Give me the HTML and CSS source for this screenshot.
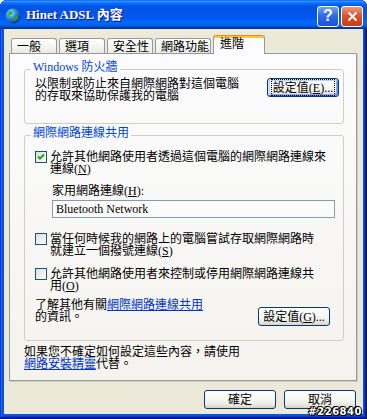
FILE: index.html
```html
<!DOCTYPE html>
<html lang="zh-Hant">
<head>
    <meta charset="UTF-8">
    <meta name="viewport" content="width=device-width, initial-scale=1.0">
    <title>Hinet ADSL 內容</title>
    <link rel="stylesheet" href="styles.css">
</head>
<body>
<div class="window">
    <!-- 標題列 -->
    <div class="titlebar">
        <svg class="app-icon" width="16" height="16" viewBox="0 0 16 16">
            <defs>
                <radialGradient id="globe" cx="0.35" cy="0.3" r="0.75">
                    <stop offset="0" stop-color="#C8F6FF"/>
                    <stop offset="0.35" stop-color="#3AA6E0"/>
                    <stop offset="1" stop-color="#1A2A8C"/>
                </radialGradient>
            </defs>
            <circle cx="8" cy="8" r="7.5" fill="url(#globe)"/>
            <path d="M4 3.5C6 2.5 8.5 3.5 7.5 5.5C6.5 7.5 4.5 6.5 3 9C2.4 7 2.8 5 4 3.5Z" fill="#34B04C"/>
            <path d="M9 8C11 7 13.5 8 13 10C12.5 12 10.5 13 9.2 12C8.6 10.5 9 9 9 8Z" fill="#2A9A40"/>
        </svg>
        <span class="title">Hinet ADSL 內容</span>
        <div class="caption-btns">
            <span class="cap help">?</span>
            <span class="cap close">
                <svg width="11" height="11" viewBox="0 0 11 11"><path d="M1.5 1.5L9.5 9.5M9.5 1.5L1.5 9.5" stroke="#fff" stroke-width="2"/></svg>
            </span>
        </div>
    </div>

    <div class="client">
        <!-- 分頁 -->
        <div class="tabs">
            <span class="tab">一般</span>
            <span class="tab">選項</span>
            <span class="tab">安全性</span>
            <span class="tab tab-wide">網路功能</span>
            <span class="tab active">進階</span>
        </div>

        <div class="panel">
            <fieldset class="group group-fw">
                <legend>Windows 防火牆</legend>
                <div class="fw-row">
                    <p class="txt">以限制或防止來自網際網路對這個電腦<br>的存取來協助保護我的電腦</p>
                    <button class="btn focused"><span class="focus-ring">設定值(<u>E</u>)...</span></button>
                </div>
            </fieldset>

            <fieldset class="group group-ics">
                <legend>網際網路連線共用</legend>
                <div class="check-row first">
                    <span class="cb"><svg width="10" height="10" viewBox="0 0 10 10"><path d="M2 4.5L4 6.5L8 2.5" fill="none" stroke="#21A121" stroke-width="2"/></svg></span>
                    <p class="txt">允許其他網路使用者透過這個電腦的網際網路連線來<br>連線(<u>N</u>)</p>
                </div>
                <p class="txt home-label">家用網路連線(<u>H</u>):</p>
                <div class="combo">Bluetooth Network</div>
                <div class="check-row dial">
                    <span class="cb"></span>
                    <p class="txt">當任何時候我的網路上的電腦嘗試存取網際網路時<br>就建立一個撥號連線(<u>S</u>)</p>
                </div>
                <div class="check-row ctrl">
                    <span class="cb"></span>
                    <p class="txt">允許其他網路使用者來控制或停用網際網路連線共<br>用(<u>O</u>)</p>
                </div>
                <div class="info-row">
                    <p class="txt">了解其他有關<a href="#">網際網路連線共用</a><br>的資訊。</p>
                    <button class="btn btn-g">設定值(<u>G</u>)...</button>
                </div>
            </fieldset>

            <p class="txt hint">如果您不確定如何設定這些內容，請使用<br><a href="#">網路安裝精靈</a>代替。</p>
        </div>

        <div class="actions">
            <button class="btn">確定</button>
            <button class="btn">取消</button>
        </div>
    </div>

    <span class="watermark">#226840</span>
</div>
</body>
</html>
```

FILE: styles.css
```css
* {
    box-sizing: border-box;
}
body {
    margin: 0;
    background: #fff;
    font-family: "Liberation Serif", "Noto Sans CJK TC", serif;
    font-size: 12px;
    line-height: 12px;
    color: #000;
}
.window {
    position: relative;
    width: 367px;
    height: 419px;
    display: flex;
    flex-direction: column;
    background: #0855DD;
    border-radius: 7px 7px 0 0;
    overflow: hidden;
    box-shadow: inset -1px -1px #00138C, inset 1px 1px #0831D9, inset -2px -2px #001EA0, inset 2px 2px #166AEE, inset -3px -3px #003BDA, inset 3px 3px #0855DD;
}

/* 標題列 */
.titlebar {
    height: 29px;
    flex: none;
    display: flex;
    align-items: center;
    padding: 0 4px 0 5px;
    background: linear-gradient(to bottom, #0058EE 0%, #3A93FF 4%, #288EFF 6%, #127DFF 8%, #0369FC 14%, #0262EE 17%, #0057E5 20%, #0054E3 24%, #0055EB 56%, #005BF5 66%, #026AFE 76%, #0062EF 86%, #0052D6 92%, #0040AB 94%, #003092 100%);
}
.app-icon {
    margin: 2px 5px 0 0;
}
.title {
    color: #fff;
    font-weight: bold;
    font-size: 13px;
    text-shadow: 1px 1px #0F1089;
}
.caption-btns {
    margin-left: auto;
    margin-top: 3px;
    display: flex;
    gap: 2px;
}
.cap {
    width: 22px;
    height: 21px;
    border: 1px solid #fff;
    border-radius: 3px;
    display: flex;
    align-items: center;
    justify-content: center;
}
.help {
    background: linear-gradient(#6FA6F8, #2E6BE6 45%, #1C52D8);
    color: #fff;
    font: bold 16px "Liberation Sans", sans-serif;
}
.close {
    background: linear-gradient(#EB9A80, #D9572F 45%, #C53D16);
}

/* 視窗內容 */
.client {
    flex: 1;
    margin: 0 4px 5px;
    background: #ECE9D8;
    display: flex;
    flex-direction: column;
}
.tabs {
    display: flex;
    align-items: flex-end;
    height: 24px;
    padding-left: 7px;
}
.tab {
    width: 46px;
    height: 15px;
    margin-right: 2px;
    padding: 2px 0 0 5px;
    border: 1px solid #919B9C;
    border-bottom: none;
    border-radius: 3px 3px 0 0;
    background: linear-gradient(#FFFFFF, #F3F3EF 60%, #ECEBE6);
    white-space: nowrap;
}
.tab-wide {
    width: 56px;
}
.tab.active {
    position: relative;
    z-index: 1;
    width: 52px;
    height: 19px;
    margin-bottom: -1px;
    padding: 2px 0 0 6px;
    border-top-color: #E68B2C;
    background: #FCFCFE;
    box-shadow: inset 0 2px #FFC73C;
}
.panel {
    height: 328px;
    margin: 0 6px 0 5px;
    padding: 7px 12px 0 14px;
    border: 1px solid #919B9C;
    background: linear-gradient(#FCFCFE, #F4F3EE);
    box-shadow: 1px 1px #D0CEBF;
}
.txt {
    margin: 0;
    white-space: nowrap;
}
a {
    color: #0033CC;
}

/* 群組方塊 */
.group {
    margin: 0;
    min-width: 0;
    padding: 0 4px 21px 10px;
    border: 1px solid #D0D0BF;
    border-radius: 3px;
}
.group legend {
    margin-left: -4px;
    padding: 0 2px 5px;
    color: #0046D5;
    line-height: 12px;
}
.fw-row {
    display: flex;
    justify-content: space-between;
    align-items: flex-start;
}
.group-ics {
    margin-top: 3px;
    padding-bottom: 14px;
}
.check-row {
    display: flex;
    gap: 3px;
}
.check-row.first {
    margin-top: 7px;
}
.check-row.dial {
    margin-top: 15px;
}
.check-row.ctrl {
    margin-top: 11px;
}
.cb {
    flex: none;
    width: 12px;
    height: 12px;
    border: 1px solid #1C5180;
    background: linear-gradient(135deg, #DCDCD7, #FFFFFF);
    display: flex;
    align-items: center;
    justify-content: center;
}
.home-label {
    margin: 10px 0 0 17px;
}
.combo {
    width: 283px;
    height: 18px;
    margin: 3px 0 0 17px;
    padding-left: 3px;
    border: 1px solid #7F9DB9;
    background: #FBFBF9;
    display: flex;
    align-items: center;
}
.info-row {
    display: flex;
    justify-content: space-between;
    align-items: flex-start;
    margin-top: 7px;
}
.hint {
    margin-top: 5px;
}

/* 按鈕 */
.btn {
    width: 72px;
    height: 19px;
    padding: 0;
    font: inherit;
    line-height: 12px;
    color: #000;
    border: 1px solid #003C74;
    border-radius: 3px;
    background: linear-gradient(#FFFFFF, #F4F4F0 60%, #E3E1D7 88%, #D6D0C5);
}
.btn.focused {
    box-shadow: inset 1px 1px #CEE7FF, inset -1px -1px #6982EE, inset 2px 2px #BCD4F6, inset -2px -2px #89ADE4;
}
.focus-ring {
    padding: 1px 1px 0;
    outline: 1px dotted #000;
}
.btn-g {
    margin: 8px 9px 0 0;
}
.actions {
    display: flex;
    justify-content: flex-end;
    gap: 8px;
    margin-top: 9px;
    padding-right: 7px;
}
.watermark {
    position: absolute;
    right: 5px;
    bottom: 2px;
    font: bold 10px "DejaVu Sans", sans-serif;
    letter-spacing: 0.5px;
    color: #fff;
    text-shadow: -1px 0 #000, 1px 0 #000, 0 -1px #000, 0 1px #000, 1px 1px #000, -1px -1px #000;
}
```
